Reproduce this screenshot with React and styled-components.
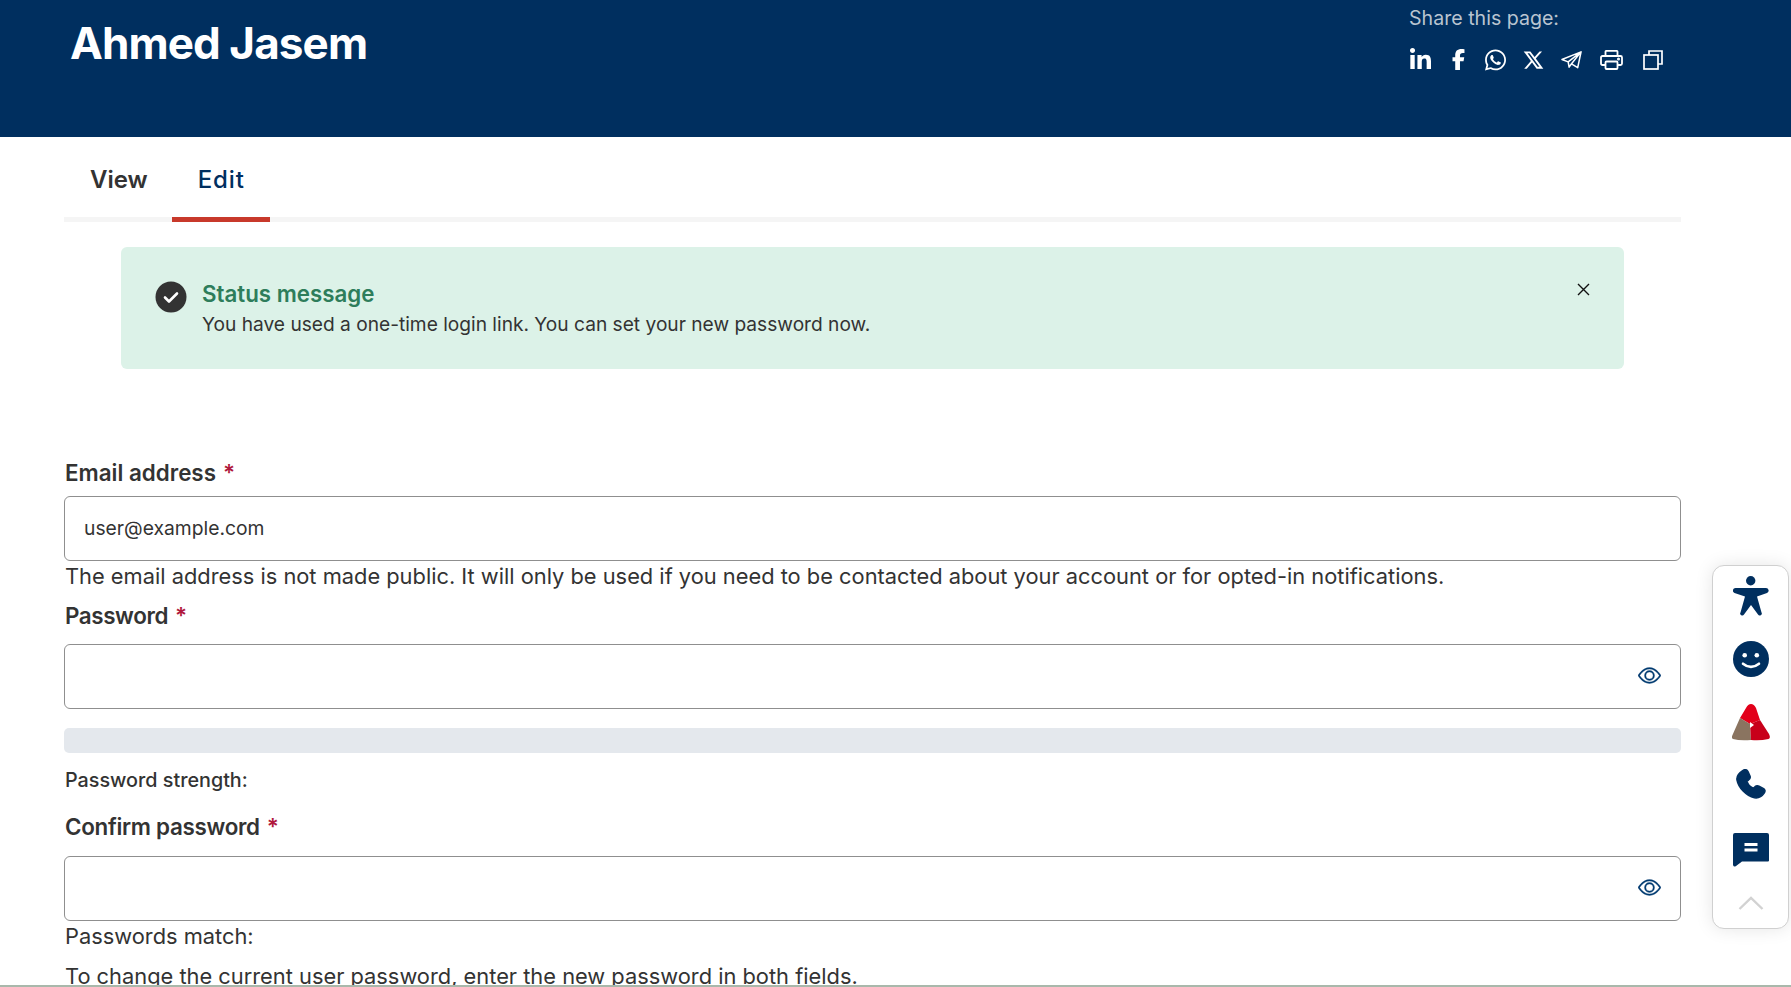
import React from 'react';
import styled, { createGlobalStyle } from 'styled-components';
import { FaLinkedinIn, FaFacebookF, FaWhatsapp } from 'react-icons/fa6';
import { RiTwitterXLine } from 'react-icons/ri';
import { BsEye } from 'react-icons/bs';

const GlobalStyle = createGlobalStyle`
  html, body {
    margin: 0;
    height: 987px;
    overflow: hidden;
    background: #fff;
  }
  body {
    font-family: Inter, "Liberation Sans", sans-serif;
    color: #333;
  }
`;

const Page = styled.div`
  position: relative;
  height: 987px;
  overflow: hidden;
`;

const Banner = styled.header`
  height: 137px;
  background: #002f5f;
  display: flex;
  justify-content: space-between;
  padding: 0 110px 0 70px;
  box-sizing: border-box;
`;

const Title = styled.h1`
  margin: 16px 0 0;
  font-size: 44px;
  line-height: 54px;
  font-weight: 700;
  letter-spacing: -0.9px;
  color: #fff;
`;

const Share = styled.div`
  width: 272px;
  padding-top: 6px;
`;

const ShareLabel = styled.div`
  font-size: 19.6px;
  line-height: 24px;
  color: #b9c4d0;
`;

const ShareIcons = styled.div`
  display: flex;
  align-items: center;
  margin-top: 18px;
  height: 23px;
  color: #fff;
  font-size: 23px;
`;

const ShareIcon = styled.span`
  display: flex;
  justify-content: center;
  width: 23px;
  margin-left: ${p => p.$left || 0}px;
`;

const Main = styled.main`
  padding: 0 110px 0 64px;
`;

const Tabs = styled.nav`
  display: flex;
  height: 85px;
  box-sizing: border-box;
  border-bottom: 5px solid #f5f5f5;
`;

const Tab = styled.a`
  display: block;
  width: ${p => (p.$active ? '98px' : 'auto')};
  height: 85px;
  box-sizing: border-box;
  padding: 27px ${p => (p.$active ? '0' : '24px')} 0 26px;
  font-size: 24px;
  line-height: 32px;
  font-weight: ${p => (p.$active ? 500 : 600)};
  letter-spacing: ${p => (p.$active ? '0.9px' : '0')};
  color: ${p => (p.$active ? '#002f5f' : '#333')};
  border-bottom: 5px solid ${p => (p.$active ? '#c8392b' : 'transparent')};
`;

const Alert = styled.div`
  position: relative;
  display: flex;
  gap: 15px;
  margin: 25px 57px 0;
  height: 122px;
  box-sizing: border-box;
  padding: 33px 34px 0;
  background: #dcf2e8;
  border-radius: 6px;
`;

const AlertIcon = styled.svg`
  width: 32px;
  height: 32px;
  margin-top: 1px;
  flex: none;
`;

const AlertTitle = styled.div`
  font-size: 22.3px;
  line-height: 28px;
  font-weight: 600;
  color: #2e7d5b;
`;

const AlertText = styled.div`
  font-size: 19.15px;
  line-height: 32px;
`;

const CloseIcon = styled.svg`
  position: absolute;
  top: 36px;
  right: 34px;
  width: 13px;
  height: 13px;
`;

const Form = styled.form`
  margin-top: 90px;
`;

const Label = styled.label`
  display: block;
  font-size: 22.4px;
  line-height: 28px;
  font-weight: 600;
  letter-spacing: ${p => p.$spacing || 0}px;
  margin-top: ${p => p.$top || 0}px;
  margin-bottom: ${p => p.$bottom || 9}px;
  padding-left: 1px;
`;

const Star = styled.span`
  color: #b0183c;
  margin-left: 7px;
`;

const Field = styled.div`
  display: flex;
  align-items: center;
  justify-content: space-between;
  height: 65px;
  box-sizing: border-box;
  padding: 0 19px 2px;
  border: 1px solid #8f8f8f;
  border-radius: 6px;
  font-size: 19.3px;
  color: #333;
`;

const Eye = styled(BsEye)`
  font-size: 23px;
  color: #003a70;
  stroke: currentColor;
  stroke-width: 0.25px;
`;

const Help = styled.div`
  font-size: 21.84px;
  line-height: 30px;
  padding-left: 1px;
  margin-top: ${p => p.$top || 0}px;
`;

const StrengthBar = styled.div`
  height: 25px;
  margin-top: 19px;
  background: #e4e8ed;
  border-radius: 5px;
`;

const StrengthText = styled.div`
  font-size: 19.75px;
  line-height: 28px;
  font-weight: 500;
  margin-top: 13px;
  padding-left: 1px;
`;

const Dock = styled.aside`
  position: absolute;
  top: 565px;
  left: 1712px;
  width: 77px;
  height: 364px;
  box-sizing: border-box;
  border: 1px solid #d0d0d0;
  border-radius: 12px;
  background: #fff;
  box-shadow: 0 0 18px rgba(0, 0, 0, 0.1);
  display: flex;
  flex-direction: column;
  align-items: center;
`;

const DockIcon = styled.svg`
  width: ${p => p.$w || 36}px;
  height: ${p => p.$h || 36}px;
  margin-top: ${p => p.$top}px;
  flex: none;
`;

const BottomEdge = styled.div`
  position: absolute;
  left: 0;
  right: 0;
  bottom: 0;
  height: 2px;
  background: #a9b8ab;
`;

const Check = () => (
  <AlertIcon viewBox="0 0 32 32">
    <circle cx="16" cy="16" r="15.5" fill="#333" />
    <path d="M10 16.5l4 4 8-8" fill="none" stroke="#fff" strokeWidth="2.6" strokeLinecap="round" strokeLinejoin="round" />
  </AlertIcon>
);

const PaperPlane = () => (
  <svg width="21" height="20" viewBox="0 0 22 20" fill="none" stroke="#fff" strokeWidth="1.6" strokeLinejoin="round">
    <path d="M1 9.5L21 1.5 17.5 18 11 14l-2.5 3.5-1-5.5zM7.5 12L21 1.5 11 14" />
  </svg>
);

const Printer = () => (
  <svg width="23" height="20" viewBox="0 0 23 20" fill="none" stroke="#fff" strokeWidth="1.8" strokeLinejoin="round">
    <path d="M5.5 6V1.5q0-.6.6-.6h10.800q.6 0 .6.6V6" />
    <path d="M5.5 15H2.500Q1 15 1 13.500v-6Q1 6 2.500 6h18Q22 6 22 7.500v6q0 1.500-1.500 1.500h-3" />
    <rect x="5.5" y="11.5" width="12" height="7.5" rx="1" />
    <circle cx="18.5" cy="9" r=".6" fill="#fff" />
  </svg>
);

const CopyIcon = () => (
  <svg width="20" height="20" viewBox="0 0 20 20" fill="none" stroke="#fff" strokeWidth="1.7">
    <path d="M6 5V1h13v13h-4" />
    <rect x="1" y="5" width="14" height="14" />
  </svg>
);

export default function App() {
  return (
    <Page>
      <GlobalStyle />
      <Banner>
        <Title>Ahmed Jasem</Title>
        <Share>
          <ShareLabel>Share this page:</ShareLabel>
          <ShareIcons>
            <ShareIcon><FaLinkedinIn size={24} /></ShareIcon>
            <ShareIcon $left={15}><FaFacebookF size={21} /></ShareIcon>
            <ShareIcon $left={14}><FaWhatsapp size={24} /></ShareIcon>
            <ShareIcon $left={15}><RiTwitterXLine size={26} /></ShareIcon>
            <ShareIcon $left={15}><PaperPlane /></ShareIcon>
            <ShareIcon $left={17}><Printer /></ShareIcon>
            <ShareIcon $left={18}><CopyIcon /></ShareIcon>
          </ShareIcons>
        </Share>
      </Banner>
      <Main>
        <Tabs>
          <Tab>View</Tab>
          <Tab $active>Edit</Tab>
        </Tabs>
        <Alert>
          <Check />
          <div>
            <AlertTitle>Status message</AlertTitle>
            <AlertText>You have used a one-time login link. You can set your new password now.</AlertText>
          </div>
          <CloseIcon viewBox="0 0 13 13">
            <path d="M1 1l11 11M12 1L1 12" stroke="#111" strokeWidth="1.4" />
          </CloseIcon>
        </Alert>
        <Form>
          <Label>Email address<Star>*</Star></Label>
          <Field>user@example.com</Field>
          <Help>The email address is not made public. It will only be used if you need to be contacted about your account or for opted-in notifications.</Help>
          <Label $top={11} $bottom={14} $spacing={-0.4}>Password<Star>*</Star></Label>
          <Field><span /><Eye /></Field>
          <StrengthBar />
          <StrengthText>Password strength:</StrengthText>
          <Label $top={19} $bottom={15} $spacing={-0.3}>Confirm password<Star>*</Star></Label>
          <Field><span /><Eye /></Field>
          <Help>Passwords match:</Help>
          <Help $top={10}>To change the current user password, enter the new password in both fields.</Help>
        </Form>
      </Main>
      <Dock>
        <DockIcon $top={10} viewBox="0 0 36 40" $h={40}>
          <circle cx="17.7" cy="4.7" r="4.7" fill="#002f5f" />
          <path d="M2.5 12H33a2.6 2.6 0 0 1 1 5L24 20.5 28.5 36.5a2 2 0 0 1-3.5 2L18 29 11 38.5a2 2 0 0 1-3.5-2L12 20.5 1.5 17a2.6 2.6 0 0 1 1-5z" fill="#002f5f" />
        </DockIcon>
        <DockIcon $top={25} viewBox="0 0 36 36">
          <circle cx="18" cy="18" r="18" fill="#002f5f" />
          <circle cx="11.7" cy="14.3" r="2.3" fill="#fff" />
          <circle cx="23.8" cy="14.3" r="2.3" fill="#fff" />
          <path d="M10 22.7q8 6.5 16 0" fill="none" stroke="#fff" strokeWidth="2.6" strokeLinecap="round" />
        </DockIcon>
        <DockIcon $top={27} viewBox="0 0 38 38" $w={38} $h={38}>
          <path d="M19 0q3 0 5 4L28 16l-10 4L8 14l6-10q2-4 5-4z" fill="#e2001a" />
          <path d="M8 14l10 6 1 16Q8 37 1 35q-2-1-.5-4z" fill="#8a7460" />
          <path d="M28 16l9 14q2 4-.5 5Q28 37 19 36l-1-16z" fill="#c8001a" />
          <path d="M18 18l4 3-4 3z" fill="#fff" />
        </DockIcon>
        <DockIcon $top={27} viewBox="0 0 32 32" $w={32} $h={32}>
          <path d="M8 1.5c2-1.5 4-1 5 1l2 4.5c.6 1.6 0 3-1.4 4l-1.6 1.3c.8 3 3 5.6 6.2 7l1.8-1.6c1.2-1 2.5-1.2 4-.5l4.2 2.2c2 1 2.3 3 1 4.7-2 3-5.2 5.4-9.700 4.700C11 26.500 3.500 18.800 2 11 1.300 7.500 4.500 3.800 8 1.500z" fill="#002f5f" stroke="#002f5f" strokeWidth="1.5" />
        </DockIcon>
        <DockIcon $top={32} viewBox="0 0 36 34" $h={34}>
          <path d="M2 0h32a2 2 0 0 1 2 2v25.500a1 1 0 0 1-1 1H9l-6 4.500A2 2 0 0 1 0 32V2a2 2 0 0 1 2-2z" fill="#002f5f" />
          <path d="M11.500 11.500h13M11.500 17h13" stroke="#fff" strokeWidth="3" />
        </DockIcon>
        <DockIcon $top={29} viewBox="0 0 26 14" $w={26} $h={14}>
          <path d="M1.500 13L13 2l11.500 11" fill="none" stroke="#d2d2d2" strokeWidth="2.4" />
        </DockIcon>
      </Dock>
      <BottomEdge />
    </Page>
  );
}
